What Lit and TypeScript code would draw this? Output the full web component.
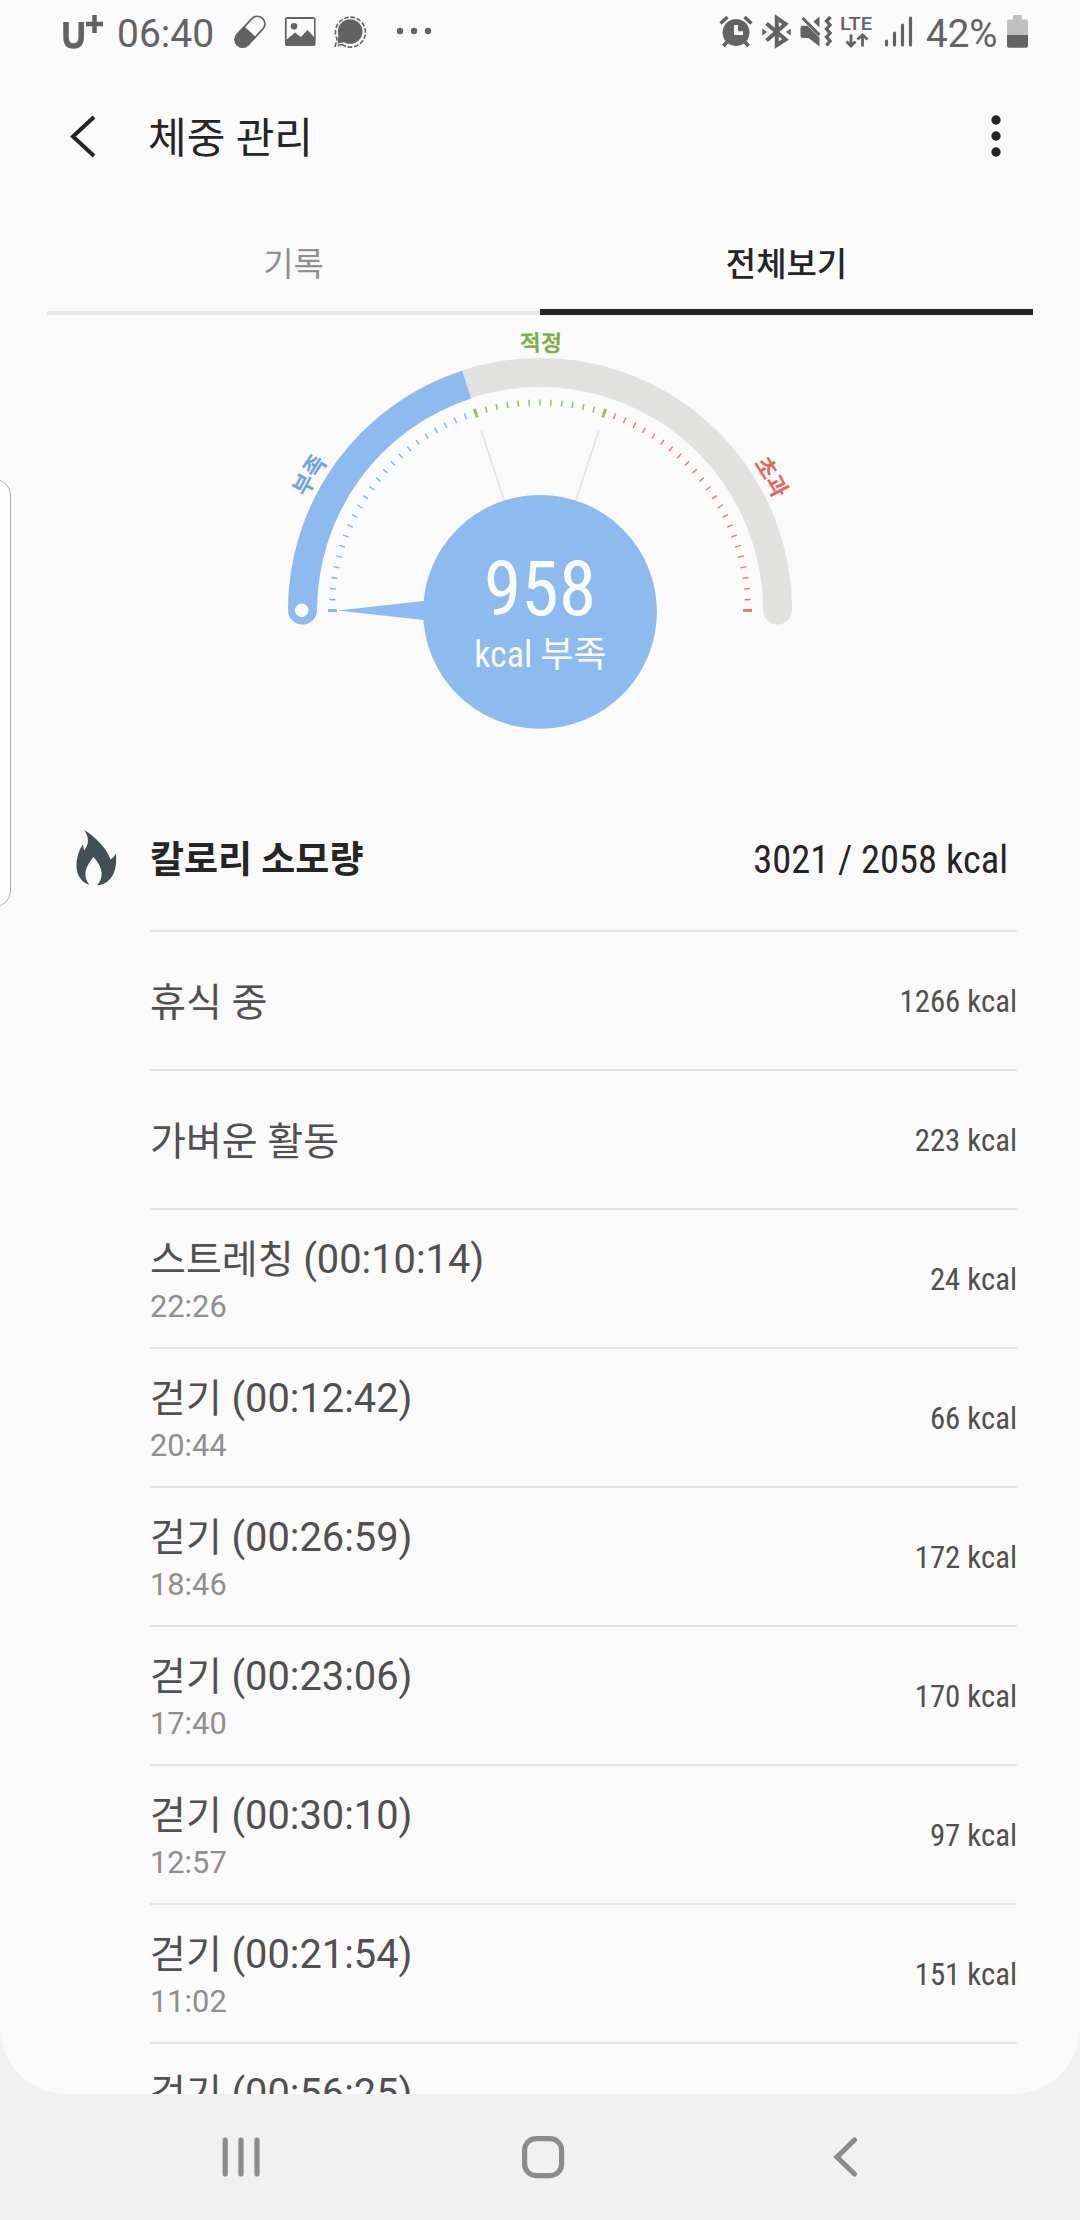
import { LitElement, html, svg, css } from "lit";
import { customElement } from "lit/decorators.js";

interface Entry { name: string; duration?: string; time?: string; kcal: string; }

const ENTRIES: Entry[] = [
  { name: "휴식 중", kcal: "1266 kcal" },
  { name: "가벼운 활동", kcal: "223 kcal" },
  { name: "스트레칭", duration: "(00:10:14)", time: "22:26", kcal: "24 kcal" },
  { name: "걷기", duration: "(00:12:42)", time: "20:44", kcal: "66 kcal" },
  { name: "걷기", duration: "(00:26:59)", time: "18:46", kcal: "172 kcal" },
  { name: "걷기", duration: "(00:23:06)", time: "17:40", kcal: "170 kcal" },
  { name: "걷기", duration: "(00:30:10)", time: "12:57", kcal: "97 kcal" },
  { name: "걷기", duration: "(00:21:54)", time: "11:02", kcal: "151 kcal" },
  { name: "걷기", duration: "(00:56:25)", time: "", kcal: "" },
];

@customElement("status-bar")
class StatusBar extends LitElement {
  static styles = css`
    :host { display: flex; height: 66px; box-sizing: border-box; padding: 0 51px 0 62px; color: #636363; justify-content: space-between; }
    .side { display: flex; align-items: flex-start; }
    svg { display: block; height: 66px; overflow: visible; }
    .text { font-size: 38.5px; line-height: 66px; padding-top: 1px; height: 65px; white-space: nowrap; }
    .clock { width: 114px; font-size: 39px; }
    .battery { width: 74px; }
  `;
  render() {
    return html`
      <div class="side">
        <svg width="55" viewBox="62 0 55 66" fill="none" stroke="#636363">
          <path d="M66 22V37.500Q66 46 73.500 46T81.200 37.500V22" stroke-width="5.500"/>
          <path d="M94.500 15V33M86 24H103" stroke-width="4.500"/>
        </svg>
        <span class="text clock">06:40</span>
        <svg width="205" viewBox="231 0 205 66" fill="#636363">
          <g transform="rotate(-47 250 31.600)">
            <rect x="231.700" y="24.200" width="36.600" height="15" rx="7.500" fill="none" stroke="#636363" stroke-width="1.700"/>
            <path d="M250 23.350H239.200a8.250 8.250 0 0 0 0 16.500H250z"/>
          </g>
          <path fill-rule="evenodd" d="M287.500 17H313a2.600 2.600 0 0 1 2.600 2.600V43.400A2.600 2.600 0 0 1 313 46H287.500a2.600 2.600 0 0 1-2.600-2.600V19.600A2.600 2.600 0 0 1 287.500 17zM286.700 19V39.500L295 32.500L301 37L307.500 30L314 37V19z"/>
          <circle cx="294" cy="26.300" r="3.300"/>
          <circle cx="350.200" cy="31.500" r="12.300"/>
          <path d="M338.500 34L337.500 43.500L346 42z"/>
          <path d="M341.800 44.400A15 15 0 1 0 337 38.800L335.200 46.200L341.800 44.400" fill="none" stroke="#636363" stroke-width="1.600" stroke-dasharray="4.600 1.800"/>
          <circle cx="400" cy="31" r="3.200"/><circle cx="414" cy="31" r="3.200"/><circle cx="428" cy="31" r="3.200"/>
        </svg>
      </div>
      <div class="side">
        <svg width="208" viewBox="718 0 208 66" fill="#636363">
          <path fill-rule="evenodd" d="M736 19a13.500 13.500 0 1 0 .1 0zM734 25H738V31.300H743V35H734z"/>
          <path d="M720.500 23.500L727.500 17M744.500 17L751.500 23.500M727 42L723.500 46M745 42L748.500 46" stroke="#636363" stroke-width="3.600" fill="none"/>
          <path d="M766.500 23.500L785.500 39.500L776.800 45V18L785.500 24L766.500 40.500" fill="none" stroke="#636363" stroke-width="4"/>
          <path d="M762.300 28.500L767 32L762.300 35.500zM790.800 28.500L786 32L790.800 35.500z"/>
          <path d="M803 25.800H807.500L819.500 37.500V46.500L808.500 38H803Q800.500 38 800.500 35.500V28.300Q800.500 25.800 803 25.800zM819.500 16.500V27.500L813.500 21.500z"/>
          <path d="M802.500 18L819.500 35" stroke="#636363" stroke-width="3"/>
          <path d="M830.500 17L826.500 21L830 25L826.500 29L830 33L826.500 37L830 41L826.500 45.500" stroke="#636363" stroke-width="3.400" fill="none"/>
          <text x="840" y="29.500" font-family="Roboto" font-weight="500" font-size="19" textLength="32" lengthAdjust="spacingAndGlyphs">LTE</text>
          <path d="M851 34.500V46M846.500 41.500L851 46L855.500 41.500M862.500 46.500V35M857.500 39.500L862.500 34.800L867.500 39.500" stroke="#636363" stroke-width="2.800" fill="none"/>
          <path d="M886.500 41V45M894.500 33V45M902.500 25V45M910.500 18V45" stroke="#636363" stroke-width="3.200" stroke-linecap="round"/>
        </svg>
        <span class="text battery">42%</span>
        <svg width="29" viewBox="1000 0 29 66">
          <path d="M1014 15H1021Q1022 15 1022 16V19.500H1026Q1028 19.500 1028 21.500V35H1007V21.500Q1007 19.500 1009 19.500H1013V16Q1013 15 1014 15z" fill="#c0c0c0"/>
          <path d="M1007 35H1028V45.700Q1028 47.700 1026 47.700H1009Q1007 47.700 1007 45.700z" fill="#636363"/>
        </svg>
      </div>`;
  }
}

@customElement("calorie-gauge")
class CalorieGauge extends LitElement {
  static styles = css`
    :host { display: block; height: 434px; }
    svg { display: block; width: 1080px; height: 434px; }
    .label { font: 500 22.500px Roboto, "Noto Sans CJK KR", sans-serif; text-anchor: middle; stroke-width: 0.5px; }
    .low { fill: #6ea3e0; stroke: #6ea3e0; }
    .good { fill: #7bae42; stroke: #7bae42; }
    .high { fill: #e5645e; stroke: #e5645e; }
    .num { font: 400 76px "Roboto Condensed", Roboto, sans-serif; font-stretch: 75%; text-anchor: middle; fill: #fafbfd; }
    .unit { font: 400 36px "Roboto Condensed", Roboto, "Noto Sans CJK KR", sans-serif; font-stretch: 75%; text-anchor: middle; fill: #fafbfd; }
  `;
  private pt(deg: number, r: number) {
    const a = (deg * Math.PI) / 180;
    return [540 - r * Math.cos(a), 610.5 - r * Math.sin(a)];
  }
  private tick(i: number) {
    const deg = i * 3;
    const major = deg === 0 || deg === 72 || deg === 108 || deg === 180;
    const color = deg < 72 ? "#82b1e8" : deg <= 108 ? "#8bc34a" : "#ea7770";
    const [x1, y1] = this.pt(deg, major ? 212 : 211);
    const [x2, y2] = this.pt(deg, major ? 203 : 205);
    return svg`<line x1=${x1} y1=${y1} x2=${x2} y2=${y2} stroke=${color} stroke-width=${major ? 2.8 : 1.4} />`;
  }
  render() {
    const [ex, ey] = this.pt(72, 237.5);
    return html`<svg viewBox="0 315 1080 434">
      <defs><path id="rim" d="M280.500 610.500A259.500 259.500 0 0 1 799.500 610.500"/></defs>
      <path d="M302.500 610A237.500 237.500 0 0 1 777.500 610" fill="none" stroke="#e2e2e0" stroke-width="29" stroke-linecap="round"/>
      <path d="M302.500 610A237.500 237.500 0 0 1 ${ex} ${ey}" fill="none" stroke="#8dbbef" stroke-width="29"/>
      <path d="M288 609.500V610a14.500 14.500 0 0 0 29 0V609.500z" fill="#8dbbef"/>
      <circle cx="301.700" cy="610.300" r="6.700" fill="#fff"/>
      ${Array.from({ length: 61 }, (_, i) => this.tick(i))}
      <path d="M481.300 430.700L505 503M598.700 430.700L575 503" stroke="#e0e0e0" stroke-width="1.300"/>
      <path d="M337.500 610.500L428 600.500V620.500z" fill="#8dbbef"/>
      <circle cx="540" cy="611.800" r="116.900" fill="#8dbbef"/>
      <text class="label low"><textPath href="#rim" startOffset="16.900%">부족</textPath></text>
      <text class="label good"><textPath href="#rim" startOffset="50.100%">적정</textPath></text>
      <text class="label high"><textPath href="#rim" startOffset="83.330%">초과</textPath></text>
      <text class="num" x="540" y="615">958</text>
      <text class="unit" x="540.500" y="667">kcal 부족</text>
    </svg>`;
  }
}

@customElement("app-root")
class AppRoot extends LitElement {
  static styles = css`
    :host { display: block; width: 1080px; height: 2220px; overflow: hidden; background: #f1f1f1; font-family: Roboto, "Noto Sans CJK KR", sans-serif; }
    .screen { position: relative; height: 2094px; overflow: hidden; background: #fafafa; border-radius: 0 0 67px 67px; }
    .header { display: flex; align-items: center; height: 140px; padding: 0 78px 0 70px; }
    .header svg { flex: none; display: block; }
    .title { flex: 1; margin: 0; padding: 6px 0 0 51px; font-size: 42px; line-height: 50px; font-weight: 400; color: #252525; }
    .tabs { display: flex; height: 109px; padding: 0 47px; align-items: flex-end; }
    .tab { flex: 1; box-sizing: border-box; height: 109px; padding-top: 34px; line-height: 50px; font-size: 33px; text-align: center; color: #8f8f8f; border-bottom: 4px solid #e6e6e6; }
    .tab.active { color: #252525; font-weight: 500; border-bottom: 6px solid #252525; }
    .summary { display: flex; height: 181px; align-items: center; padding: 40px 72px 0 74px; box-sizing: border-box; }
    .flame { display: block; width: 44px; height: 60px; margin-top: -3px; }
    .heading { flex: 1; margin: 0; padding: 3px 0 0 32px; font-size: 37px; line-height: 60px; font-weight: 700; color: #252525; }
    .total { font: 400 38.500px/60px "Roboto Condensed", Roboto, sans-serif; font-stretch: 75%; color: #252525; }
    .list { padding: 0 63px 0 150px; margin: 0; list-style: none; }
    .row { display: flex; align-items: center; justify-content: space-between; box-sizing: border-box; height: 139px; border-top: 2px solid #e6e6e6; color: #505050; }
    .entry { padding-top: 4px; }
    .name { font-size: 39px; line-height: 50px; height: 50px; white-space: nowrap; }
    .duration { font-size: 39.8px; }
    .time { font-size: 30.800px; line-height: 40px; color: #8f8f8f; min-height: 40px; padding-top: 2px; }
    .kcal { padding-top: 2px; font: 400 30.800px/40px "Roboto Condensed", Roboto, sans-serif; font-stretch: 75%; }
    .edge { position: absolute; left: -24px; top: 479px; width: 33px; height: 426px; border: 1.500px solid #adadad; border-radius: 16px; background: #fdfdfd; }
    .nav { display: flex; height: 126px; }
    .nav svg { display: block; width: 1080px; height: 126px; }
  `;
  private row(e: Entry) {
    return html`<li class="row">
      <div class="entry">
        <div class="name">${e.name}${e.duration ? html` <span class="duration">${e.duration}</span>` : null}</div>
        ${e.time === undefined ? null : html`<div class="time">${e.time}</div>`}
      </div>
      <div class="kcal">${e.kcal}</div>
    </li>`;
  }
  render() {
    return html`
      <div class="screen">
        <status-bar></status-bar>
        <header class="header">
          <svg width="27" height="44" viewBox="70 114 27 44" fill="none" stroke="#252525" stroke-width="4"><path d="M94 117L73 136.500L94 156"/></svg>
          <h1 class="title">체중 관리</h1>
          <svg width="12" height="44" viewBox="989.500 114.500 12 44" fill="#252525"><circle cx="995.500" cy="120.500" r="4.700"/><circle cx="995.500" cy="136.500" r="4.700"/><circle cx="995.500" cy="152.500" r="4.700"/></svg>
        </header>
        <nav class="tabs"><div class="tab">기록</div><div class="tab active">전체보기</div></nav>
        <calorie-gauge></calorie-gauge>
        <section class="summary">
          <svg class="flame" viewBox="74 828 44 60" fill="#424f57"><path d="M84.300 830C94 836 107 848 110.500 859.500Q114 857.500 116 853.500C117.500 874 110 884 97 885.300C104 878 103.500 868 93.500 857C84 868 83 877 89.500 884.800C80 882 76 873 76.500 864C77 856 79.500 849 83 844.500L84 850.500C89 845 89.500 838 84.300 830z"/></svg>
          <h2 class="heading">칼로리 소모량</h2>
          <div class="total">3021 / 2058 kcal</div>
        </section>
        <ul class="list">${ENTRIES.map((e) => this.row(e))}</ul>
        <div class="edge"></div>
      </div>
      <div class="nav">
        <svg viewBox="0 2094 1080 126" fill="none" stroke="#8c8c8c" stroke-width="5.200" stroke-linecap="round">
          <path d="M225.200 2140V2174M241 2140V2174M257 2140V2174"/>
          <rect x="524.600" y="2138.600" width="37" height="37" rx="11.500"/>
          <path d="M854.500 2140L837 2157L854.500 2174"/>
        </svg>
      </div>`;
  }
}
